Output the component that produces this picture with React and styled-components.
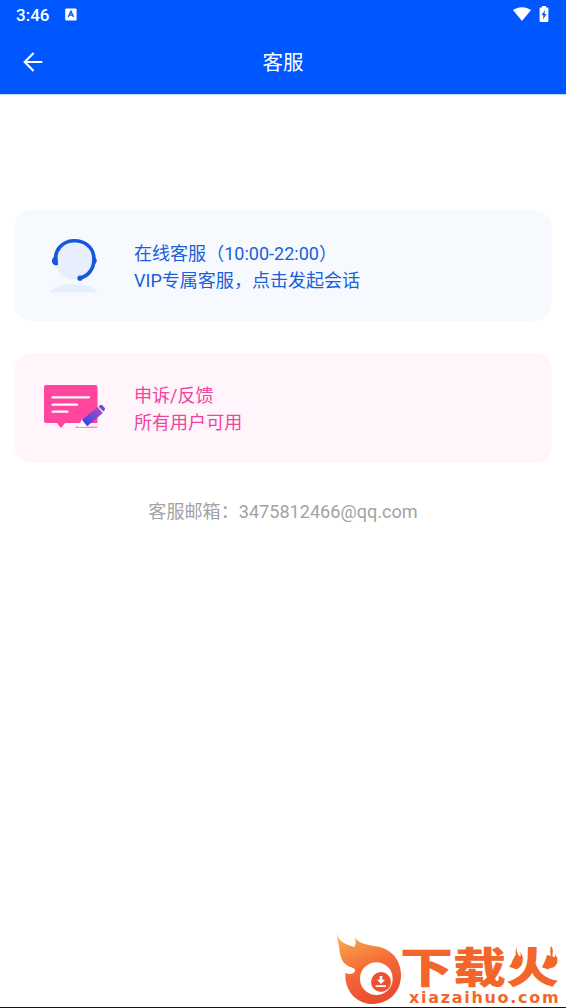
import React from "react";
import styled, { createGlobalStyle } from "styled-components";

const GlobalStyle = createGlobalStyle`
  * { box-sizing: border-box; }
  body { margin: 0; background: #fff; font-family: Roboto, "Noto Sans CJK SC", sans-serif; }
`;

const Screen = styled.div`
  position: relative;
  display: flex;
  flex-direction: column;
  width: 566px;
  height: 1008px;
  overflow: hidden;
  background: #fff;
  border-bottom: 1px solid #14141c;
`;

const Header = styled.header`
  height: 94px;
  flex: none;
  background: #0057ff;
  color: #fff;
  box-shadow: 0 1px 0 #c3dafa;
`;

const StatusBar = styled.div`
  display: flex;
  align-items: center;
  height: 28px;
  padding: 1px 17px 0 16px;
`;

const Clock = styled.span`
  width: 49px;
  font-size: 17px;
  font-weight: 500;
  line-height: 20px;
`;

const StatusIcons = styled.div`
  display: flex;
  gap: 8px;
  margin: -2px 0 0 auto;
`;

const AppBar = styled.div`
  display: grid;
  grid-template-columns: 66px 1fr 66px;
  align-items: center;
  height: 66px;
`;

const BackButton = styled.button`
  display: flex;
  justify-content: center;
  padding: 1px 0 0;
  border: 0;
  background: none;
  color: inherit;
`;

const Title = styled.h1`
  margin: 0;
  padding-top: 3px;
  font-size: 20.5px;
  font-weight: 400;
  line-height: 28px;
  text-align: center;
`;

const Main = styled.main`
  display: flex;
  flex-direction: column;
  padding: 116px 14px 0;
`;

const Card = styled.section`
  display: flex;
  align-items: center;
  height: ${(p) => p.$height}px;
  margin-bottom: 32px;
  border-radius: 18px;
  background: ${(p) => p.$bg};
  color: ${(p) => p.$color};
`;

const CardIcon = styled.div`
  display: flex;
  width: 120px;
  height: 100%;
`;

const CardText = styled.div`
  padding-top: 2px;
  font-size: 18.05px;
  line-height: 27px;
  white-space: nowrap;
`;

const Email = styled.p`
  margin: 3px 0 0;
  color: #a3a3a3;
  font-size: 18.1px;
  line-height: 27px;
  text-align: center;
`;

const Brand = styled.div`
  position: absolute;
  left: 330px;
  top: 928px;
  display: flex;
  width: 236px;
  height: 80px;
`;

const BrandWords = styled.div`
  position: relative;
  display: flex;
  flex-direction: column;
  width: 156px;
  padding-top: 11px;
  color: #f3662b;
`;

const BrandName = styled.strong`
  height: 49px;
  margin-left: -10px;
  font: 900 53px/52px "Noto Sans CJK SC", sans-serif;
  white-space: nowrap;
  transform: scaleY(0.8);
  transform-origin: 0 26px;
`;

const BrandUrl = styled.span`
  margin-left: -1px;
  font: 700 16px/20px "DejaVu Sans", sans-serif;
  letter-spacing: 1.7px;
  white-space: nowrap;
`;

const FlameTips = styled.svg`
  position: absolute;
  left: 98px;
  top: 18px;
`;

function HeadsetIcon() {
  return (
    <svg width="120" height="111" viewBox="14 210 120 111" fill="none">
      <circle cx="74" cy="261" r="18.5" fill="#e7effd" />
      <path d="M50 292.5C56 281 92 281 98 292.5Z" fill="#e7effd" />
      <path d="M55.7 263C52 234.5 93.5 233.5 94 259C94 268 89 276 80 278" stroke="#1458db" strokeWidth="3.6" strokeLinecap="round" />
      <path d="M55.5 256.5C50.8 257 50.8 264 55 265.3H58L57.5 256.5Z" fill="#1458db" />
      <path d="M92.5 256.5C98.2 257 98.2 264 92.5 265Z" fill="#1458db" />
      <circle cx="80" cy="278.2" r="2.6" fill="#1458db" />
    </svg>
  );
}

function FeedbackIcon() {
  return (
    <svg width="120" height="110" viewBox="14 353 120 110" fill="none">
      <defs>
        <linearGradient id="pencil" x1="96" y1="408" x2="85" y2="425" gradientUnits="userSpaceOnUse">
          <stop stopColor="#a04bc6" />
          <stop offset="1" stopColor="#3245e8" />
        </linearGradient>
      </defs>
      <path d="M46 385H95.5Q97.5 385 97.5 387V423H65L62 427Q61 428 60 427L57 423H46Q44 423 44 421V387Q44 385 46 385Z" fill="#ff459e" />
      <path d="M52.5 397.3H89M52.5 404.7H77M52.5 411.7H67.5" stroke="#fff" strokeWidth="2.2" strokeLinecap="round" />
      <path d="M75.5 427.2H97.5" stroke="#fb6cab" strokeWidth="1.1" />
      <path d="M82 418.8L78.5 426.9L87.5 426.5Z" fill="#fff" />
      <path d="M82 420L97.5 407L102.8 413L87.2 426.2Z" fill="url(#pencil)" />
      <path d="M98.5 406.5L100.2 405.1Q101.5 404.4 102.6 405.5L104.8 408Q105.5 409.2 104.5 410.2L103.3 411.5Z" fill="#754dcb" />
    </svg>
  );
}

function FlameLogo() {
  return (
    <svg width="80" height="80" viewBox="0 0 240 240">
      <defs>
        <linearGradient id="flame" x1="50" y1="30" x2="120" y2="220" gradientUnits="userSpaceOnUse">
          <stop stopColor="#f8a64a" />
          <stop offset="0.5" stopColor="#f46b36" />
          <stop offset="1" stopColor="#ec4d32" />
        </linearGradient>
      </defs>
      <path d="M20 18C30 46 48 48 72 57C79 49 78 40 74 28C86 45 104 50 133 54C181 59 212 93 213 139C214 190 180 225 132 228C82 230 43 191 46 134C56 141 72 139 75 129C77 118 61 120 50 111C26 93 32 70 20 18Z" fill="url(#flame)" />
      <circle cx="139" cy="152" r="49" fill="#fff" />
      <circle cx="153" cy="162" r="30" fill="#ee5130" />
      <path d="M149 144H157V155H165L153 168L141 155H149ZM137 172H168V177H137Z" fill="#fff" />
    </svg>
  );
}

export default function App() {
  return (
    <Screen>
      <GlobalStyle />
      <Header>
        <StatusBar>
          <Clock>3:46</Clock>
          <svg width="12" height="13" viewBox="0 0 12 13">
            <rect x="0.2" y="0.5" width="11.4" height="12" rx="1" fill="#fff" />
            <path d="M3.3 9L5.9 3.2L8.5 9M4.1 7.1H7.7" stroke="#0057ff" strokeWidth="1.4" fill="none" />
          </svg>
          <StatusIcons>
            <svg width="18" height="16" viewBox="0 0 18 16">
              <path d="M0 4.1C5 .2 13 .2 18 4.1L9 15Z" fill="#fff" />
            </svg>
            <svg width="10" height="16" viewBox="0 0 10 16">
              <path d="M3 0H7V1.6H8.5Q9.4 1.6 9.4 2.5V15Q9.4 16 8.5 16H1.5Q.6 16 .6 15V2.5Q.6 1.6 1.5 1.6H3Z" fill="#fff" />
              <path d="M6 4L2.5 9.3H4.5L4 13.5L7.5 8H5.5Z" fill="#0057ff" />
            </svg>
          </StatusIcons>
        </StatusBar>
        <AppBar>
          <BackButton aria-label="返回">
            <svg width="20" height="20" viewBox="0 0 20 20" fill="none" stroke="currentColor" strokeWidth="2.1">
              <path d="M19.3 10H2M10.6 1L1.7 10L10.6 19" />
            </svg>
          </BackButton>
          <Title>客服</Title>
        </AppBar>
      </Header>
      <Main>
        <Card $height={111} $bg="#f6faff" $color="#1b5fd8">
          <CardIcon><HeadsetIcon /></CardIcon>
          <CardText>
            <div>在线客服（10:00-22:00）</div>
            <div>VIP专属客服，点击发起会话</div>
          </CardText>
        </Card>
        <Card $height={110} $bg="#fff5fb" $color="#f0449e">
          <CardIcon><FeedbackIcon /></CardIcon>
          <CardText>
            <div>申诉/反馈</div>
            <div>所有用户可用</div>
          </CardText>
        </Card>
        <Email>客服邮箱：3475812466@qq.com</Email>
      </Main>
      <Brand>
        <FlameLogo />
        <BrandWords>
          <BrandName>下载火</BrandName>
          <FlameTips width="52" height="24" viewBox="508 946 52 24" fill="#f3662b">
            <path d="M517 947C515 952 520 955 519 958C521 957 521 954 520 952C525 957 523 968 517 968.5C511 968 511 961 514 958C514 960 515 961 516 960C517 957 514 951 517 947Z" />
            <path d="M551 946C555 951 551 955 553 958C555 958 556 956 555 954C560 960 557 968 550 968C544 967 545 958 548 956C547 959 549 961 550 960C552 956 549 951 551 946Z" />
          </FlameTips>
          <BrandUrl>xiazaihuo.com</BrandUrl>
        </BrandWords>
      </Brand>
    </Screen>
  );
}
